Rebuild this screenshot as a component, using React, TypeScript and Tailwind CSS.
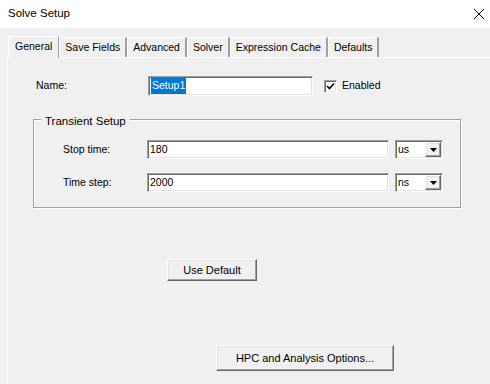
import React from 'react';

const sunken =
  'border border-t-[#a0a0a0] border-l-[#a0a0a0] border-b-white border-r-white shadow-[inset_1px_1px_0_#696969,inset_-1px_-1px_0_#e3e3e3] bg-white';
const raised =
  'border border-t-white border-l-white border-b-[#696969] border-r-[#696969] shadow-[inset_-1px_-1px_0_#a0a0a0,inset_1px_1px_0_#e3e3e3] bg-[#f0f0f0]';

const tabs = ['General', 'Save Fields', 'Advanced', 'Solver', 'Expression Cache', 'Defaults'];

const Arrow: React.FC = () => (
  <svg width="7" height="4" viewBox="0 0 7 4">
    <path d="M0 0h7L3.5 4z" fill="#000" />
  </svg>
);

const UnitSelect: React.FC<{ value: string }> = ({ value }) => (
  <div className={`${sunken} w-[48px] h-[19px] flex items-center justify-between pl-[2px] pr-[1px]`}>
    <span className="leading-none">{value}</span>
    <div className={`${raised} w-[16px] h-[15px] flex items-center justify-center`}>
      <Arrow />
    </div>
  </div>
);

const Row: React.FC<{ label: string; value: string; unit: string }> = ({ label, value, unit }) => (
  <div className="flex items-center h-[19px]">
    <span className="w-[84px]">{label}</span>
    <div className={`${sunken} w-[242px] h-[19px] flex items-center pl-[2px]`}>{value}</div>
    <div className="ml-[6px]">
      <UnitSelect value={unit} />
    </div>
  </div>
);

const App: React.FC = () => {
  return (
    <div
      className="w-[490px] h-[384px] bg-[#f0f0f0] overflow-hidden text-[10.5px] text-black flex flex-col"
      style={{ fontFamily: '"Liberation Sans", Arial, sans-serif' }}
    >
      {/* title bar */}
      <div className="h-[28px] bg-white flex items-center justify-between pl-[8px] pr-[4px] shrink-0">
        <span className="text-[11.5px]">Solve Setup</span>
        <svg width="12" height="12" viewBox="0 0 12 12" className="mr-[1px]">
          <path d="M1 1l10 10M11 1L1 11" stroke="#000" strokeWidth="1" />
        </svg>
      </div>

      {/* tabs */}
      <div className="pl-[8px] pt-[7px] flex items-end h-[29px] shrink-0">
        {tabs.map((t, i) =>
          i === 0 ? (
            <div
              key={t}
              className="h-[22px] px-[6px] pt-[2px] flex items-start border-l border-t border-white border-r border-r-[#a0a0a0] bg-[#f0f0f0] relative top-[1px] z-10"
            >
              {t}
            </div>
          ) : (
            <div
              key={t}
              className="h-[20px] px-[5px] flex items-center border-t border-white border-r-2 border-r-[#a0a0a0] border-l border-l-white"
            >
              {t}
            </div>
          )
        )}
      </div>

      {/* panel */}
      <div className="ml-[7px] flex-1 border-l border-t border-white pl-[28px] pt-[18px]">
        <div className="flex items-center h-[20px]">
          <span className="w-[112px]">Name:</span>
          <div className={`${sunken} w-[165px] h-[20px] flex items-center pl-[2px]`}>
            <span className="bg-[#0078d7] text-white px-[1px]">Setup1</span>
          </div>
          <div className={`${sunken} ml-[11px] w-[13px] h-[13px] flex items-center justify-center`}>
            <svg width="9" height="9" viewBox="0 0 9 9">
              <path d="M1 4l2.5 2.5L8 1.5" stroke="#000" strokeWidth="1.6" fill="none" />
            </svg>
          </div>
          <span className="ml-[5px]">Enabled</span>
        </div>

        {/* group box */}
        <div className="mt-[23px] -ml-[3px] w-[428px] h-[89px] border border-[#a0a0a0] shadow-[inset_1px_1px_0_#fff,1px_1px_0_#fff] relative pl-[29px] pt-[20px] flex flex-col gap-[14px]">
          <span className="absolute -top-[7px] left-[7px] px-[4px] bg-[#f0f0f0] text-[11.5px]">
            Transient Setup
          </span>
          <Row label="Stop time:" value="180" unit="us" />
          <Row label="Time step:" value="2000" unit="ns" />
        </div>

        <div className={`${raised} mt-[51px] ml-[131px] w-[90px] h-[22px] flex items-center justify-center text-[11px]`}>
          Use Default
        </div>
        <div className={`${raised} mt-[64px] ml-[180px] w-[178px] h-[26px] flex items-center justify-center text-[11px]`}>
          HPC and Analysis Options...
        </div>
      </div>
    </div>
  );
};

export default App;
